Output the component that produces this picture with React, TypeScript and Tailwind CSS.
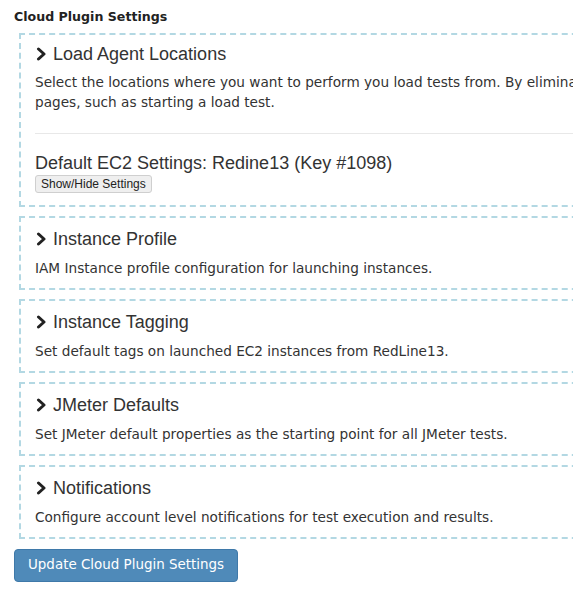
import React from "react";

function Chevron() {
  return (
    <svg width="11" height="14" viewBox="0 0 11 14" className="mr-[6px] shrink-0">
      <path d="M2.5 2 L8 7 L2.5 12" fill="none" stroke="#222" strokeWidth="3" strokeLinecap="round" strokeLinejoin="round" />
    </svg>
  );
}

function Heading({ children }: { children: React.ReactNode }) {
  return (
    <div className="flex items-center pl-[1px] text-[18px] leading-[22px] text-[#333] font-['Liberation_Sans',Arial,sans-serif]">
      <Chevron />
      {children}
    </div>
  );
}

function Desc({ children, className = "" }: { children: React.ReactNode; className?: string }) {
  return (
    <div className={"text-[13.65px] leading-[20px] text-[#333] whitespace-nowrap font-['DejaVu_Sans',Verdana,sans-serif] " + className}>
      {children}
    </div>
  );
}

function Section({ title, desc }: { title: string; desc: string }) {
  return (
    <div className="w-[800px] border-2 border-dashed border-[#b3d8e3] pl-3.5 pt-2.5 pb-2.5">
      <Heading>{title}</Heading>
      <Desc className="mt-2">{desc}</Desc>
    </div>
  );
}

export default function App() {
  return (
    <div className="w-[573px] h-[595px] overflow-hidden bg-white pt-2">
      <div className="pl-3.5 text-[12.6px] font-bold text-[#222] leading-[18px] font-['DejaVu_Sans',Verdana,sans-serif]">
        Cloud Plugin Settings
      </div>
      <div className="ml-[19px] mt-[7px] flex flex-col gap-[9px]">
        <div className="w-[800px] border-2 border-dashed border-[#b3d8e3] pl-3.5 pt-2 pb-3">
          <Heading>Load Agent Locations</Heading>
          <Desc className="mt-[7px]">
            Select the locations where you want to perform you load tests from. By eliminating unused locations
            <br />
            pages, such as starting a load test.
          </Desc>
          <div className="mt-[21px] h-px w-[760px] bg-[#e8e8e8]" />
          <div className="mt-[18px] text-[18px] leading-[22px] text-[#333] font-['Liberation_Sans',Arial,sans-serif]">
            Default EC2 Settings: Redine13 (Key #1098)
          </div>
          <button className="mt-[1px] block h-[18px] px-[5px] text-[12px] leading-[16px] text-[#222] bg-[#efefef] border border-[#cfcfcf] rounded-[3px] font-['Liberation_Sans',Arial,sans-serif]">
            Show/Hide Settings
          </button>
        </div>
        <Section title="Instance Profile" desc="IAM Instance profile configuration for launching instances." />
        <Section title="Instance Tagging" desc="Set default tags on launched EC2 instances from RedLine13." />
        <Section title="JMeter Defaults" desc="Set JMeter default properties as the starting point for all JMeter tests." />
        <Section title="Notifications" desc="Configure account level notifications for test execution and results." />
      </div>
      <button className="ml-3.5 mt-2.5 block h-[33px] px-[13px] text-[13.45px] text-white bg-[#4f8ab9] border border-[#3f79a9] rounded-[4px] font-['DejaVu_Sans',Verdana,sans-serif]">
        Update Cloud Plugin Settings
      </button>
    </div>
  );
}
